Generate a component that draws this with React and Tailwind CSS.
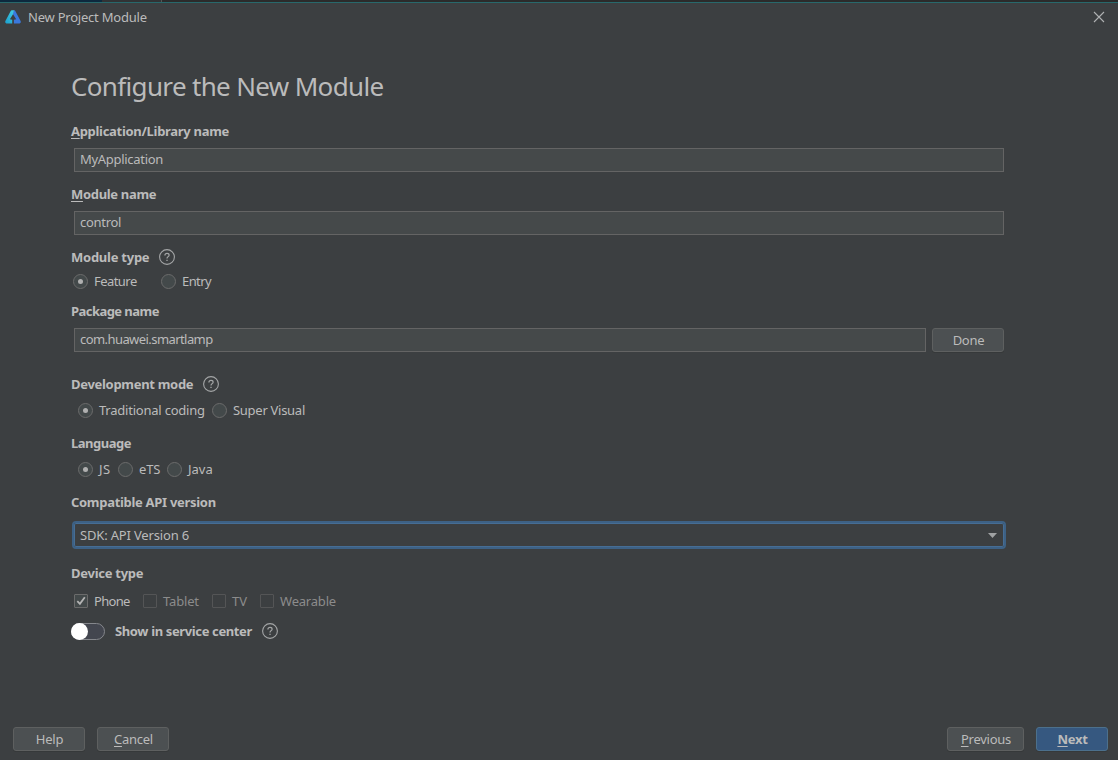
function Label({ hot, children, className = "" }) {
  return (
    <div className={`flex h-5 items-center text-[13px] font-bold whitespace-nowrap ${className}`}>
      <span>
        {hot && <span className="underline underline-offset-2">{hot}</span>}
        {children}
      </span>
    </div>
  );
}

function HelpIcon({ className = "" }) {
  return (
    <svg className={`size-4 shrink-0 ${className}`} viewBox="0 0 16 16" fill="none" stroke="#a4a6a7">
      <circle cx="8" cy="8" r="7.4" strokeWidth="1.1" />
      <path d="M5.9 6.4C5.9 5 6.8 4.4 8 4.4s2.1.7 2.1 1.8C10.100 7.600 8 7.700 8 9.400" strokeWidth="1.2" />
      <path d="M8 10.700v1.300" strokeWidth="1.300" />
    </svg>
  );
}

function Field({ value, className = "" }) {
  return (
    <div className={`flex h-6 items-center border border-[#646464] bg-[#45494a] pb-0.5 pl-[5px] text-[13px] ${className}`}>
      {value}
    </div>
  );
}

function Radio({ label, checked, className = "", textClass = "" }) {
  return (
    <div className={`flex h-[19px] shrink-0 items-center gap-1.5 whitespace-nowrap ${className}`}>
      <span className="flex size-[15px] shrink-0 items-center justify-center rounded-full border border-[#6b6b6b] bg-[#43494a]">
        {checked && <span className="size-[5px] rounded-full bg-[#b0b0b0]" />}
      </span>
      <span className={`pb-px ${textClass}`}>{label}</span>
    </div>
  );
}

function Check({ label, checked, className = "", textClass = "" }) {
  return (
    <div className={`flex h-5 shrink-0 items-center gap-1.5 whitespace-nowrap ${checked ? "" : "text-[#8c8c8c]"} ${className}`}>
      <span
        className={`flex size-3.5 shrink-0 items-center justify-center rounded-[1px] border ${
          checked ? "border-[#6b6b6b] bg-[#43494a]" : "border-[#545556]"
        }`}
      >
        {checked && (
          <svg className="size-3 shrink-0" viewBox="0 0 12 12" fill="none" stroke="#b4b4b4" strokeWidth="1.8">
            <path d="M2.300 6.200 4.900 8.800 9.800 2.300" />
          </svg>
        )}
      </span>
      <span className={textClass}>{label}</span>
    </div>
  );
}

function Button({ hot, children, primary, className = "" }) {
  return (
    <button
      className={`flex h-6 w-[72px] shrink-0 items-center justify-center rounded-[3px] border pl-px text-[13px] tracking-[-0.25px] shadow-[0_1px_0_#36393a] ${
        primary ? "border-[#4c708c] bg-[#365880] font-bold" : "border-[#5e6060] bg-[#4c5052]"
      } ${className}`}
    >
      <span>
        {hot && <span className="underline underline-offset-2">{hot}</span>}
        {children}
      </span>
    </button>
  );
}

export default function App() {
  return (
    <div className="flex h-[760px] w-[1118px] flex-col overflow-hidden bg-[#3c3f41] font-['Noto_Sans',sans-serif] text-[13px] leading-5 text-[#bbbbbb]">
      <div className="flex h-[3px] shrink-0 border-b border-[#28686b] bg-[#2b2b2b]">
        <div className="w-[102px] bg-[#0d293e]" />
        <div className="w-[60px] border-r border-[#555555] bg-[#313335]" />
      </div>
      <header className="flex h-7 shrink-0 items-center pl-[5px] pr-3">
        <svg className="h-4 w-4" viewBox="0 0 16 16">
          <defs>
            <linearGradient id="left" x1="0" y1="1" x2="1" y2="0">
              <stop offset="0" stopColor="#1b9fce" />
              <stop offset="1" stopColor="#45d0e4" />
            </linearGradient>
          </defs>
          <path d="M6.800 1.200H9.200L10 3.500 8 5.200 4.900 10.300 7.200 10.800V14.400H1.300Q-.3 13.800.4 12.100L5.700 2.100Q6.100 1.300 6.800 1.200Z" fill="url(#left)" />
          <path d="M8.800 1.200Q9.800 1.200 10.300 2.100L15.600 12.100Q16.300 13.800 14.700 14.400H8.900V10.800L11.200 10.300 8 5.200Z" fill="#3a78dc" />
        </svg>
        <span className="ml-[7px] tracking-[-0.22px]">New Project Module</span>
        <svg className="ml-auto size-[14px]" viewBox="0 0 14 14" stroke="#b0b2b3" strokeWidth="1.100">
          <path d="M2 2 12 12M12 2 2 12" />
        </svg>
      </header>

      <main className="flex grow flex-col pl-[71px] pr-[114px]">
        <h1 className="mt-[35px] mb-px h-10 text-[26px] leading-10 tracking-[-0.66px] whitespace-nowrap">
          Configure the New Module
        </h1>

        <Label hot="A" className="mt-3.5 tracking-[-0.3px]">pplication/Library name</Label>
        <Field value="MyApplication" className="mt-[7px] ml-[3px] tracking-[-0.3px]" />

        <Label hot="M" className="mt-3 tracking-[-0.32px]">odule name</Label>
        <Field value="control" className="mt-[7px] ml-[3px] tracking-[-0.3px]" />

        <div className="mt-3 flex items-center">
          <Label className="w-[88px] tracking-[-0.25px]">Module type</Label>
          <HelpIcon />
        </div>
        <div className="mt-[5px] flex pl-0.5">
          <Radio label="Feature" checked className="w-[88px]" textClass="tracking-[-0.55px]" />
          <Radio label="Entry" textClass="tracking-[-0.6px]" />
        </div>

        <Label className="mt-2.5 tracking-[-0.55px]">Package name</Label>
        <div className="mt-[7px] flex gap-1.5 pl-[3px]">
          <Field value="com.huawei.smartlamp" className="grow tracking-[-0.57px]" />
          <Button>Done</Button>
        </div>

        <div className="mt-[22px] flex items-center">
          <Label className="w-[132px] tracking-[-0.3px]">Development mode</Label>
          <HelpIcon />
        </div>
        <div className="mt-[7px] flex pl-[7px]">
          <Radio label="Traditional coding" checked className="w-[134px]" textClass="tracking-[-0.22px]" />
          <Radio label="Super Visual" textClass="tracking-[-0.28px]" />
        </div>

        <Label className="mt-[13px] tracking-[-0.5px]">Language</Label>
        <div className="mt-[7px] flex pl-[7px]">
          <Radio label="JS" checked className="w-10" textClass="tracking-[0.5px]" />
          <Radio label="eTS" className="w-[49px]" textClass="tracking-[-0.2px]" />
          <Radio label="Java" />
        </div>

        <Label className="mt-[13px] tracking-[-0.3px]">Compatible API version</Label>
        <div className="mt-[9px] -mr-0.5 ml-px flex h-7 items-center justify-between rounded-[4px] border-2 border-[#3d6185] px-1.5 inset-ring inset-ring-[#466d94]">
          <span className="tracking-[-0.17px]">SDK: API Version 6</span>
          <svg className="mr-px h-[5px] w-[9px]" viewBox="0 0 9 5" fill="#a0a2a3">
            <path d="M0 0h9L4.500 5z" />
          </svg>
        </div>

        <Label className="mt-3.5 tracking-[-0.27px]">Device type</Label>
        <div className="mt-2 flex pl-[3px]">
          <Check label="Phone" checked className="w-[69px]" textClass="tracking-[-0.7px]" />
          <Check label="Tablet" className="w-[69px]" textClass="tracking-[-0.17px]" />
          <Check label="TV" className="w-12" />
          <Check label="Wearable" textClass="tracking-[-0.2px]" />
        </div>
        <div className="mt-[11px] flex h-[19px] items-center">
          <span className="flex h-[17px] w-[34px] rounded-full border border-[#85878c] bg-[#43464f]">
            <span className="-m-px size-[17px] rounded-full bg-white" />
          </span>
          <Label className="ml-2.5 w-[147px] pb-px tracking-[-0.37px]">Show in service center</Label>
          <HelpIcon className="relative -top-px" />
        </div>
      </main>

      <footer className="flex h-[33px] shrink-0 items-start pr-2.5 pl-[13px]">
        <Button>Help</Button>
        <Button hot="C" className="ml-3">ancel</Button>
        <Button hot="P" className="ml-auto w-[77px]!">revious</Button>
        <Button hot="N" primary className="ml-3">ext</Button>
      </footer>
    </div>
  );
}
